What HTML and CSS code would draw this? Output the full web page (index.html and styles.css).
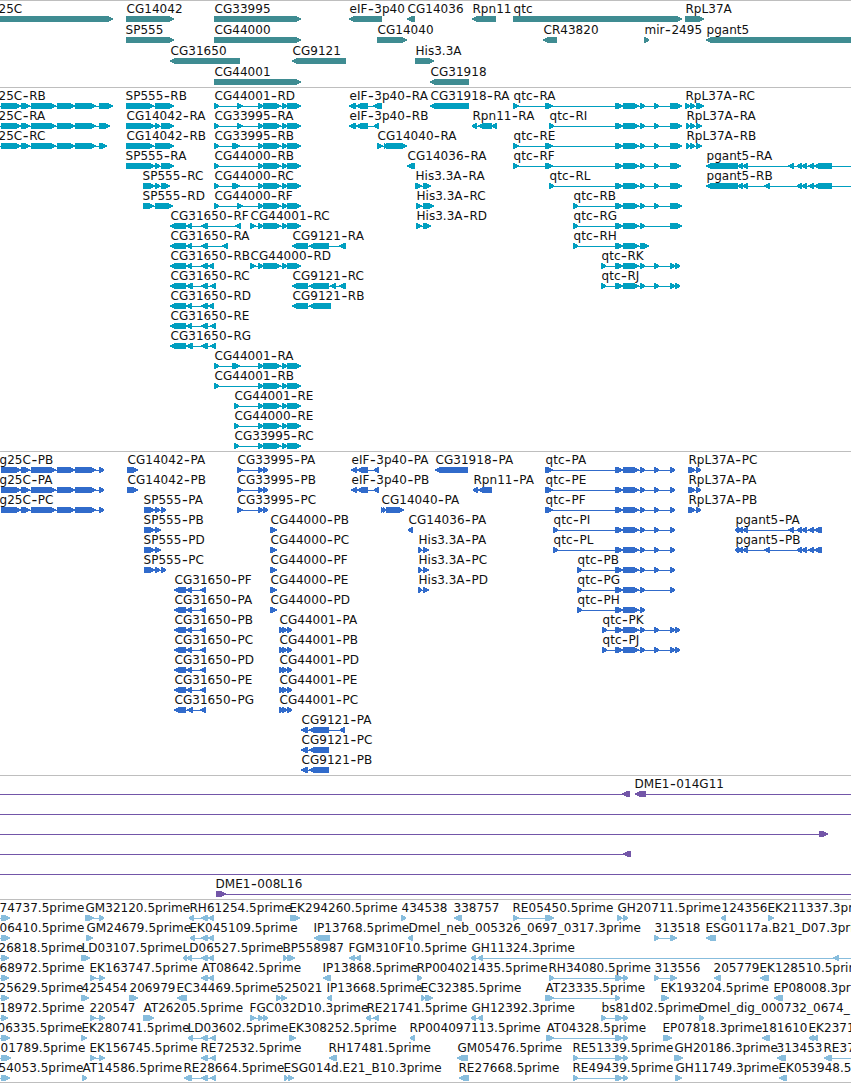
FILE: index.html
```
<!DOCTYPE html>
<html lang="en">
<head>
<meta charset="utf-8">
<title>Genome browser</title>
<link rel="stylesheet" href="styles.css">
</head>
<body>
<main class="browser">
  <section class="track track--gene" data-track="gene"></section>
  <section class="track track--transcript" data-track="transcript"></section>
  <section class="track track--protein" data-track="protein"></section>
  <section class="track track--clone" data-track="clone"></section>
  <section class="track track--est" data-track="est"></section>
</main>
<script src="tracks.js"></script>
</body>
</html>
```

FILE: styles.css
```
body {
  margin: 0;
  background: #fff;
  overflow: hidden;
}

.browser {
  display: flex;
  flex-direction: column;
  width: 851px;
  height: 1083px;
  overflow: hidden;
  border-bottom: 1px solid #bebebe;
  box-sizing: border-box;
}

.track {
  display: flex;
  flex-direction: column;
  flex: none;
  border-top: 1px solid #bebebe;
  padding-bottom: 3px;
}

.track--gene { color: #3f8c92; padding-bottom: 2px; }
.track--transcript { color: #009fc0; }
.track--protein { color: #316bcb; }
.track--clone { color: #7356a8; }
.track--est { color: #87bddd; padding-bottom: 2px; }

.row {
  display: block;
  width: 851px;
  height: 20px;
  overflow: visible;
}

.track--gene .row { height: 21px; }

.span, .block {
  fill: currentColor;
  shape-rendering: crispEdges;
}

.label {
  fill: #111;
  font-family: "DejaVu Sans", sans-serif;
  font-size: 12px;
  letter-spacing: 0.03px;
  white-space: pre;
}

.dash {
  font-size: 16px;
  letter-spacing: 0.6px;
}
```

FILE: tracks.js
```
// Feature syntax: name[@labelX] direction start..end,start..end [~lineStart..lineEnd]
const QTC = '615..623,623..639,640..645,654..659';
const CGX = '258..263,263..281,282..287,287..301';
const PG_A = '738..743,743..748,788..794,797..802,802..807,808..814';
const PG_B = '738..743,743..748,764..770,797..802,802..807,808..814';
const COL = '1..21,21..30,31..56,57..75,75..96';

const tracks = {
  gene: [
    '25C@-2 > -20..113; CG14042 > 126..174; CG33995 > 214..301; eIF-3p40 < 349..382; CG14036 < 407..415; Rpn11 < 472..496; qtc > 513..682; RpL37A > 685..704',
    'SP555@125 > 126..174; CG44000 > 214..301; CG14040 > 377..407; CR43820 < 543..557; mir-2495 > 644..649; pgant5 < 706..860',
    'CG31650 < 170..240; CG9121 < 292..346; His3.3A > 415..434',
    'CG44001 > 214..301; CG31918 < 430..469'
  ],
  transcript: [
    `25C-RB@-2 > ${COL},99..113 ~-5..113; SP555-RB@125 > 126..154,155..174; CG44001-RD > 214..219,237..243,${CGX}; eIF-3p40-RA < 349..356,356..368,373..382; CG31918-RA < 430..469; qtc-RA > 513..519,545..553,${QTC},670..682; RpL37A-RC > 685..690,690..695,696..704`,
    `25C-RA@-2 > ${COL},99..110 ~-5..110; CG14042-RA > 126..155,155..160,161..174; CG33995-RA > 214..219,237..243,${CGX}; eIF-3p40-RB < 349..356,356..368,374..379; Rpn11-RA < 472..477,478..492,492..497; qtc-RI > 549..554,${QTC},670..682; RpL37A-RA > 686..690,690..695,696..702`,
    `25C-RC@-2 > ${COL},99..107 ~-5..107; CG14042-RB > 126..154,155..174; CG33995-RB > 214..219,232..240,${CGX}; CG14040-RA > 377..383,384..386,386..407; qtc-RE > 513..519,545..553,${QTC},670..682; RpL37A-RB > 686..690,690..695,696..702`,
    `SP555-RA@125 > 126..155,155..160,161..174; CG44000-RB > 214..219,${CGX}; CG14036-RA < 407..415; qtc-RF > 513..519,545..553,${QTC},670..681; pgant5-RA < 706..738,${PG_A},814..832 ~706..860`,
    `SP555-RC@142 > 143..155,155..160,161..170; CG44000-RC > 214..219,232..240,${CGX}; His3.3A-RA > 415..422,423..431; qtc-RL > 549..554,${QTC},670..682; pgant5-RB < 706..738,${PG_B},814..832 ~706..860`,
    `SP555-RD@142 > 143..154,155..173; CG44000-RF > 214..219,237..243,${CGX}; His3.3A-RC > 416..422,423..434; qtc-RB > 573..578,${QTC},670..682`,
    `CG31650-RF < 170..186,186..192,201..208,235..241; CG44001-RC > 250..256,${CGX}; His3.3A-RD > 416..422,423..431; qtc-RG > 573..578,615..623,623..639,640..645,670..682`,
    `CG31650-RA < 170..186,186..192,201..208,222..228; CG9121-RA < 292..308,309..329,339..346; qtc-RH > 573..578,615..623,623..639,640..649`,
    `CG31650-RB < 170..186,186..192,201..208,208..214; CG44000-RD > 250..256,${CGX}; qtc-RK > 601..606,${QTC},670..675,675..680`,
    `CG31650-RC < 170..186,186..193,201..208,210..216; CG9121-RC < 292..308,309..329,330..336,339..346; qtc-RJ > 601..606,${QTC},670..675,675..680`,
    'CG31650-RD < 170..186,186..192,201..208,208..214; CG9121-RB < 292..308,309..331',
    'CG31650-RE < 170..186,186..192,201..208,210..216',
    'CG31650-RG < 170..186,186..193,201..208,210..216',
    `CG44001-RA > 214..219,232..240,${CGX}`,
    `CG44001-RB > 214..219,${CGX}`,
    `CG44001-RE > 234..239,${CGX}`,
    `CG44000-RE > 234..239,${CGX}`,
    `CG33995-RC > 234..239,${CGX}`
  ],
  protein: [
    `g25C-PB@-1 > ${COL},99..104; CG14042-PA > 127..138; CG33995-PA > 237..243,258..263,263..268; eIF-3p40-PA < 351..357,357..368,374..379; CG31918-PA < 435..468; qtc-PA > 545..553,${QTC},670..675; RpL37A-PC > 688..692,690..695,696..701`,
    `g25C-PA@-1 > ${COL},99..104; CG14042-PB > 127..138; CG33995-PB > 237..243,258..263,263..268; eIF-3p40-PB < 351..357,357..368,374..379; Rpn11-PA < 473..478,478..492; qtc-PE > 545..553,${QTC},670..675; RpL37A-PA > 688..692,690..695,696..701`,
    `g25C-PC@-1 > ${COL},99..104; SP555-PA@143 > 144..155,155..160,161..166; CG33995-PC > 237..243,258..263,263..268; CG14040-PA > 381..384,383..386,386..404; qtc-PF > 545..553,${QTC},670..675; RpL37A-PB > 688..692,690..695,696..701`,
    `SP555-PB@143 > 144..155,155..161; CG44000-PB > 270..277; CG14036-PA < 408..413; qtc-PI > 553..558,${QTC},670..675; pgant5-PA < 735..739,${PG_A},814..822`,
    `SP555-PD@143 > 144..155,155..161; CG44000-PC > 270..277; His3.3A-PA > 418..422,423..429; qtc-PL > 553..558,${QTC},670..675; pgant5-PB < 735..739,${PG_B},814..822`,
    `SP555-PC@143 > 144..155,155..160,161..166; CG44000-PF > 270..277; His3.3A-PC > 418..422,423..429; qtc-PB > 577..582,${QTC},670..675`,
    'CG31650-PF < 174..186,186..192,200..206; CG44000-PE > 270..277; His3.3A-PD > 418..422,423..429; qtc-PG > 577..582,615..623,623..639,640..645,670..675',
    'CG31650-PA < 174..186,186..192,200..206; CG44000-PD > 270..277; qtc-PH > 577..582,615..623,623..639,640..645',
    `CG31650-PB < 174..186,186..192,200..206; CG44001-PA > 279..283,282..287,287..292; qtc-PK > 602..607,${QTC},670..675,675..680`,
    `CG31650-PC < 174..186,186..192,200..206; CG44001-PB > 279..283,282..287,287..292; qtc-PJ > 602..607,${QTC},670..675,675..680`,
    'CG31650-PD < 174..186,186..192,200..206; CG44001-PD > 279..283,282..287,287..292',
    'CG31650-PE < 174..186,186..192,200..206; CG44001-PE > 279..283,282..287,287..292',
    'CG31650-PG < 174..186,187..193,200..206; CG44001-PC > 279..283,282..287,287..292',
    'CG9121-PA < 301..308,309..329,340..345',
    'CG9121-PC < 301..308,309..329',
    'CG9121-PB < 301..308,309..329'
  ],
  clone: [
    ' < 622..630 ~-10..630; DME1-014G11@634 < 635..646 ~635..860',
    ' > ~-10..860',
    ' > 819..828 ~-10..828',
    ' < 623..631 ~-10..631',
    ' > ~-10..860',
    'DME1-008L16@215 > 216..226 ~216..860'
  ],
  est: [
    '74737.5prime@-1 > 1..10 ~-5..10; GM32120.5prime > 85..94,99..104; RH61254.5prime < 189..194,201..208,208..214; EK294260.5prime@289 > 290..300; 434538 > 401..406; 338757@453 < 454..462; RE05450.5prime@512 > 513..519,545..554; GH20711.5prime > 617..622,623..628; 124356 < 721..726; EK211337.3prime@767 > 768..774',
    '06410.5prime@-1 > 1..10 ~-5..10; GM24679.5prime > 86..93; EK045109.5prime@189 < 190..195,201..208,208..214; IP13768.5prime@313 < 314..330; Dmel_neb_005326_0697_0317.3prime < 408..413; 313518 > 654..659,670..677; ESG0117a.B21_D07.3prime@705 < 706..716',
    '26818.5prime@-2 > 1..9 ~-5..9; LD03107.5prime > 81..90; LD06527.5prime@182 < 183..187,187..192,201..208,208..214; BP558987@282 > 283..287,287..295; FGM310F10.5prime@348 < 349..355,355..361; GH11324.3prime < 471..476,478..483,833..839 ~471..860',
    '68972.5prime@-1 > 1..9 ~-5..9; EK163747.5prime@89 > 90..96,99..105; AT08642.5prime < 201..208,208..214; IP13868.5prime@322 < 323..331; RP004021435.5prime@416 > 417..422; RH34080.5prime@548 > 549..554,615..623,623..628; 313556 > 654..659,670..677; 205779@713 < 714..721; EK128510.5prime@759 < 760..769',
    '25629.5prime@-2 > 1..9 ~-5..9; 425454 > 81..89; 206979 > 129..138; EC34469.5prime@176 < 177..187; 525021 > 276..282,281..287; IP13668.5prime@326 < 327..332; EC32385.5prime@420 > 421..425,425..433; AT23335.5prime > 545..554,615..620; EK193204.5prime@660 > 661..669; EP08008.3prime@773 < 774..783',
    '18972.5prime@-1 > 1..8 ~-5..8; 220547@89 > 90..96,99..105; AT26205.5prime > 143..154; FGC032D10.3prime@249 > 250..256,258..263,263..268; RE21741.5prime < 366..371,373..379; GH12392.3prime < 471..476,478..483; bs81d02.5prime > 601..606,615..623,623..628; Dmel_dig_000732_0674_@698 > 699..704',
    '06335.5prime@-3 > 1..10 ~-5..10; EK280741.5prime > 81..87; LD03602.5prime@187 < 188..193,201..208,210..216; EK308252.5prime@288 > 289..296; RP004097113.5prime@409 < 410..415; AT04328.5prime > 546..554,615..623,623..628; EP07818.3prime@662 > 663..672; 181610@761 < 762..770; EK2371@808 < 809..814,813..818',
    '01789.5prime@0 > 1..11 ~-5..11; EK156745.5prime@89 > 90..96,99..105; RE72532.5prime@200 < 201..208,210..216; RH17481.5prime@328 < 329..337; GM05476.5prime < 457..468; RE51339.5prime@572 > 573..578,615..623,623..628; GH20186.3prime > 674..683; 313453@776 < 777..786; RE37@823 < 824..832 ~824..860',
    '54053.5prime@-2 > 1..10 ~-5..10; AT14586.5prime > 82..87; RE28664.5prime@183 < 184..192,201..208,210..216; ESG014d.E21_B10.3prime@283 > 284..288,288..294; RE27668.5prime@458 < 459..469; RE49439.5prime@572 > 573..578,615..623,623..628; GH11749.3prime > 675..682; EK053948.5prime@778 < 779..787'
  ]
};

const NS = 'http://www.w3.org/2000/svg';
const TOP = 15;

function add(parent, tag, attrs, text) {
  const el = document.createElementNS(NS, tag);
  for (const key in attrs) el.setAttribute(key, attrs[key]);
  if (text !== undefined) el.textContent = text;
  parent.appendChild(el);
  return el;
}

function range(text) {
  return text.split('..').map(Number);
}

// Block with a blunt arrow head on the side it points to
function arrowPath(a, b, dir) {
  const head = Math.min(b - a, 6) - 1;
  const [tail, tip, sign] = dir === '>' ? [a, b, 1] : [b, a, -1];
  const neck = tip - sign * head;
  return `M${tail} ${TOP}H${neck}L${tip} ${TOP + 2.4}V${TOP + 3.8}L${neck} ${TOP + 6}H${tail}Z`;
}

function drawLabel(svg, x, name) {
  const text = add(svg, 'text', { class: 'label', x: x + 0.5, y: 12 });
  name.split('-').forEach((part, i) => {
    if (i) add(text, 'tspan', { class: 'dash', dx: 0.5, dy: 1 }, '-');
    add(text, 'tspan', i ? { dy: -1 } : {}, part);
  });
}

function drawFeature(svg, source) {
  const [, name, at, dir, rest] = source.match(/^\s*([^@\s]*)(?:@(-?\d+))?\s+([<>])\s+(.*)$/);
  const [blockText, lineText] = rest.split('~');
  const blocks = blockText.trim() ? blockText.trim().split(',').map(range) : [];
  const line = lineText ? range(lineText) : [blocks[0][0], blocks[blocks.length - 1][1]];
  add(svg, 'rect', { class: 'span', x: line[0], y: TOP + 3, width: line[1] - line[0], height: 1 });
  for (const [a, b] of blocks) add(svg, 'path', { class: 'block', d: arrowPath(a, b, dir) });
  if (name) drawLabel(svg, at !== undefined ? +at : blocks[0][0], name);
}

document.querySelectorAll('[data-track]').forEach(section => {
  for (const source of tracks[section.dataset.track]) {
    const svg = add(section, 'svg', { class: 'row' });
    source.split(';').forEach(feature => drawFeature(svg, feature));
  }
});
```
